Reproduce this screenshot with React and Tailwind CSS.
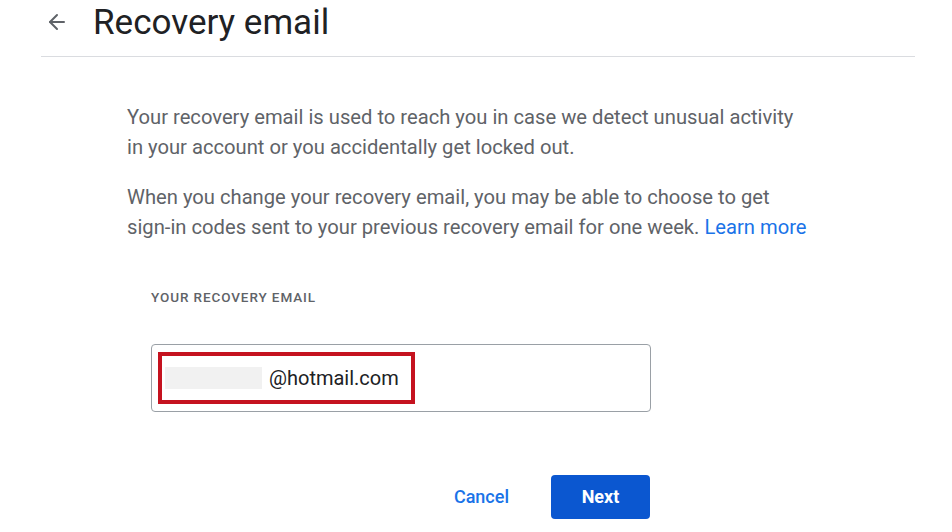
import {ArrowLeft} from 'lucide-react'

function Header() {
  return (
    <div className="flex items-center h-[44px] pl-[45px]">
      <ArrowLeft className="text-[#5f6368]" style={{width: '24px', height: '24px'}} strokeWidth={2} />
      <h1 className="ml-[24px] text-[35px] leading-none text-[#202124] font-['Roboto',sans-serif] font-normal">
        Recovery email
      </h1>
    </div>
  )
}

function App() {
  return (
    <div className="w-[952px] h-[532px] bg-white overflow-hidden font-['Roboto',sans-serif]">
      <div className="pt-0">
        <Header />
        <div className="ml-[41px] mr-[37px] mt-[12px] border-b border-[#dadce0]" />
      </div>
      <div className="pl-[127px] pt-[45px] text-[20.2px] leading-[30px] text-[#5f6368]">
        <p>
          Your recovery email is used to reach you in case we detect unusual activity
          <br />
          in your account or you accidentally get locked out.
        </p>
        <p className="mt-[20px]">
          When you change your recovery email, you may be able to choose to get
          <br />
          sign-in codes sent to your previous recovery email for one week.{' '}
          <span className="text-[#1a73e8]">Learn more</span>
        </p>
      </div>
      <div className="pl-[151px] pt-[49px]">
        <div className="text-[13.5px] font-medium tracking-[0.9px] text-[#5f6368] leading-none">
          YOUR RECOVERY EMAIL
        </div>
        <div className="mt-[39px] w-[500px] h-[68px] border border-[#9aa0a6] rounded-[4px] flex items-center pl-[6px]">
          <div className="w-[257px] h-[52px] border-[4px] border-[#c5121f] flex items-center pl-[3px]">
            <div className="w-[97px] h-[22px] bg-[#f1f1f1]" />
            <span className="ml-[7px] text-[20px] text-[#202124]">@hotmail.com</span>
          </div>
        </div>
      </div>
      <div className="flex justify-end items-center w-[650px] mt-[63px] gap-[42px]">
        <button className="text-[18px] font-medium text-[#1a73e8]">Cancel</button>
        <button className="w-[99px] h-[44px] rounded-[4px] bg-[#0b57d0] text-white text-[18px] font-bold">
          Next
        </button>
      </div>
    </div>
  )
}

export default App
